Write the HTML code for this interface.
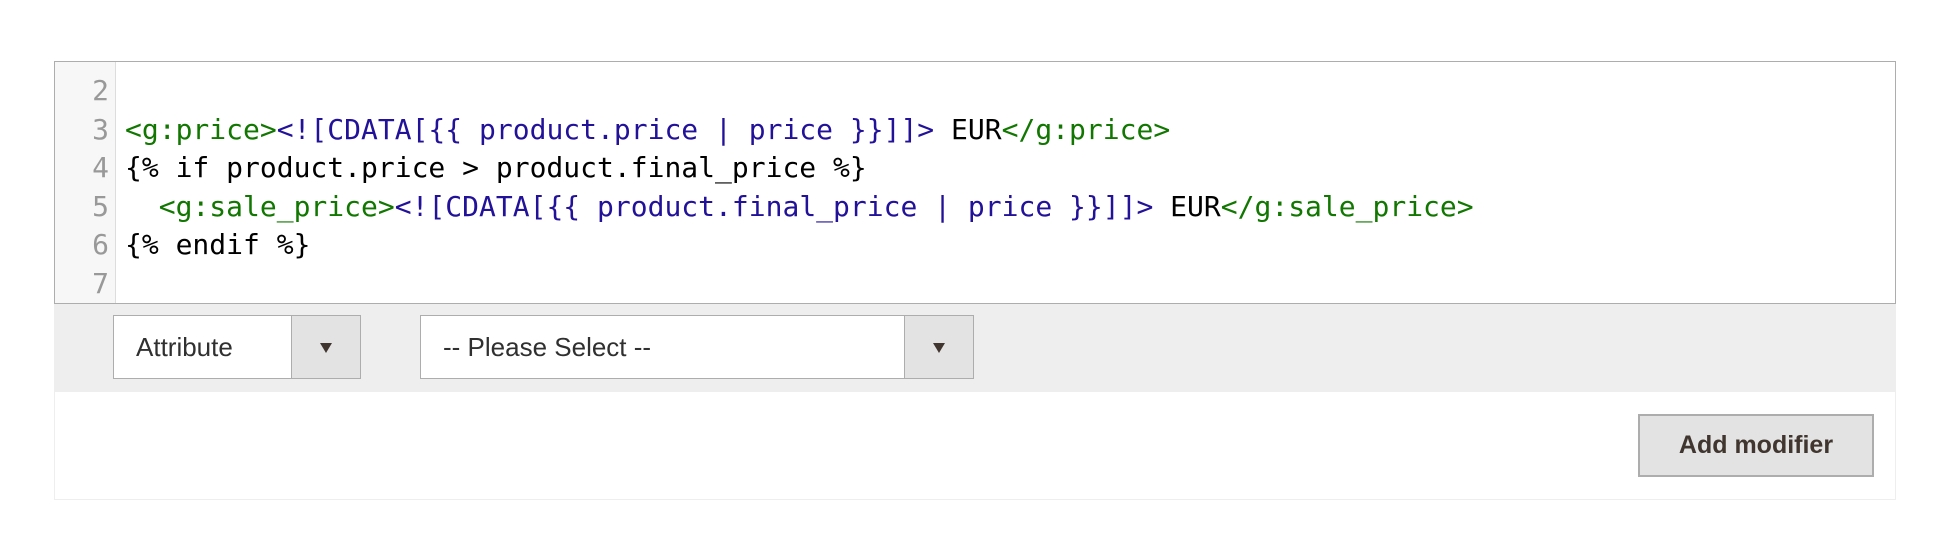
<!DOCTYPE html>
<html><head><style>
body{margin:0;width:1944px;height:548px;background:#fff;position:relative;font-family:"Liberation Sans",sans-serif;overflow:hidden}
.ed{position:absolute;left:54px;top:61px;width:1840px;height:241px;border:1px solid #adadad;background:#fff;overflow:hidden}
.gut{position:absolute;left:0;top:0;width:60px;height:100%;background:#f7f7f7;border-right:1px solid #ddd}
.ln{position:absolute;left:0;width:54px;text-align:right;color:#999;font:28px "DejaVu Sans Mono",monospace;line-height:38.6px}
.cd{position:absolute;left:70px;white-space:pre;font:28px "DejaVu Sans Mono",monospace;line-height:38.6px;color:#000}
.t{color:#170}.s{color:#219}
.band{position:absolute;left:54px;top:304px;width:1842px;height:88px;background:#eee}
.foot{position:absolute;left:54px;top:392px;width:1840px;height:107px;border:1px solid #eee;border-top:none;background:#fff}
.sel{position:absolute;top:315px;height:64px;border:1px solid #adadad;background:#fff;box-sizing:border-box}
.sel span{position:absolute;left:22px;top:0;line-height:62px;font-size:26px;color:#303030}
.arr{position:absolute;right:0;top:0;bottom:0;width:68px;background:#e3e3e3;border-left:1px solid #adadad}
.arr:after{content:"";position:absolute;left:28px;top:27px;border-left:6px solid transparent;border-right:6px solid transparent;border-top:10px solid #41362f}
.btn{position:absolute;left:1638px;top:414px;width:236px;height:63px;box-sizing:border-box;border:2px solid #adadad;background:#e3e3e3;text-align:center;line-height:59px;font-size:25px;font-weight:bold;color:#41362f}
</style></head><body>
<div class="ed"><div class="gut"></div>
<div class="ln" style="top:10px">2<br>3<br>4<br>5<br>6<br>7</div>
<div class="cd" style="top:10px"> 
<span class="t">&lt;g:price&gt;</span><span class="s">&lt;![CDATA[{{ product.price | price }}]]&gt;</span> EUR<span class="t">&lt;/g:price&gt;</span>
{% if product.price &gt; product.final_price %}
  <span class="t">&lt;g:sale_price&gt;</span><span class="s">&lt;![CDATA[{{ product.final_price | price }}]]&gt;</span> EUR<span class="t">&lt;/g:sale_price&gt;</span>
{% endif %}
 </div></div>
<div class="band"></div>
<div class="foot"></div>
<div class="sel" style="left:113px;width:248px"><span>Attribute</span><div class="arr"></div></div>
<div class="sel" style="left:420px;width:554px"><span>-- Please Select --</span><div class="arr"></div></div>
<div class="btn">Add modifier</div>
</body></html>
